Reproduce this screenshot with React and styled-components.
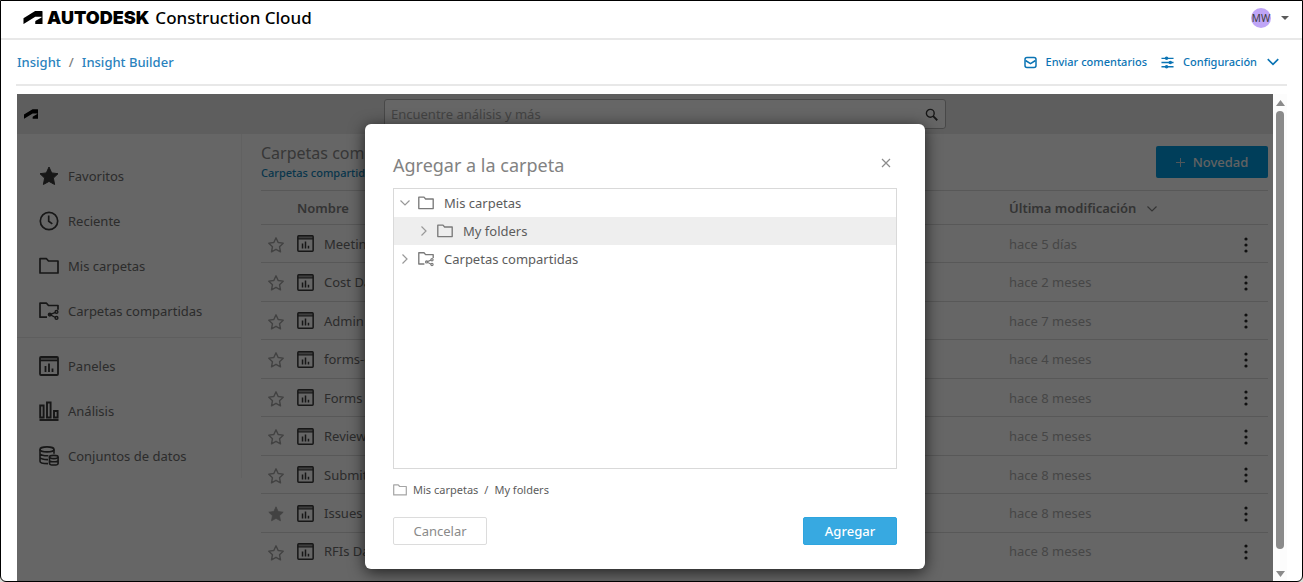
import styled, { createGlobalStyle, css } from "styled-components";

const GlobalStyle = createGlobalStyle`
  * {
    box-sizing: border-box;
  }
  html {
    background: #dcdcd6;
  }
  body {
    margin: 0;
    overflow: hidden;
    font-family: "Noto Sans", "Open Sans", sans-serif;
    font-size: 13px;
    line-height: 18px;
    color: #000;
  }
  button, input {
    font: inherit;
    color: inherit;
    margin: 0;
    padding: 0;
    border: 0;
    background: none;
  }
  a {
    text-decoration: none;
  }
`;

const Page = styled.div`
  display: flex;
  flex-direction: column;
  height: 100vh;
  border: 1px solid #000;
  border-radius: 0 0 6px 6px;
  background: #fff;
  overflow: hidden;
`;

/* ---------- product header ---------- */

const Header = styled.header`
  display: flex;
  flex: none;
  align-items: center;
  justify-content: space-between;
  height: 39px;
  padding: 0 13px 4px 22px;
  border-bottom: 2px solid #e8e8e8;
`;

const Brand = styled.div`
  display: flex;
  align-items: center;
  gap: 4px;
`;

const Wordmark = styled.span`
  font-family: Inter, sans-serif;
  font-size: 18px;
  font-weight: 900;
  line-height: 20px;
`;

const Product = styled.span`
  font-size: 17px;
  font-weight: 500;
  line-height: 20px;
  margin-left: 2px;
`;

const Account = styled.button`
  display: flex;
  align-items: center;
  gap: 10px;
`;

const Avatar = styled.span`
  width: 20px;
  height: 20px;
  border-radius: 50%;
  background: #bfa5f7;
  color: #3c3c3c;
  font-size: 10px;
  line-height: 20px;
  text-align: center;
`;

/* ---------- breadcrumb bar ---------- */

const SubBar = styled.div`
  display: flex;
  flex: none;
  align-items: center;
  justify-content: space-between;
  height: 46px;
  margin: 0 15px;
  padding: 0 7px 0 1px;
  border-bottom: 2px solid #e8e8e8;
  color: #0b74b4;
`;

const Crumbs = styled.nav`
  display: flex;
  gap: 8px;
  color: #808080;
  font-weight: 500;

  a {
    color: #2a82bd;
  }
`;

const Actions = styled.div`
  display: flex;
  gap: 14px;
`;

const Action = styled.button`
  display: flex;
  align-items: center;
  gap: 9px;
  font-size: 11px;
  font-weight: 500;
`;

/* ---------- embedded application ---------- */

const Frame = styled.div`
  display: flex;
  flex: 1;
  min-height: 0;
  margin: 8px 15px 0 16px;
`;

const Pane = styled.div`
  position: relative;
  flex: 1;
  min-width: 0;
  overflow: hidden;
  background: #fff;
`;

const TopBar = styled.div`
  display: flex;
  align-items: center;
  height: 40px;
  padding-left: 7px;
  background: #ececec;
`;

const TopLogo = styled.div`
  display: flex;
  flex: 0 0 360px;
`;

const Search = styled.label`
  display: flex;
  flex: 0 1 562px;
  align-items: center;
  height: 30px;
  padding: 0 7px 0 6px;
  border: 1px solid #b4b4b4;
  border-radius: 3px;
  background: #fff;

  input {
    flex: 1;
    outline: 0;
  }
  input::placeholder {
    color: #aaa;
    opacity: 1;
  }
  svg {
    color: #3a3a3a;
  }
`;

const Body = styled.div`
  display: flex;
  align-items: flex-start;
`;

const Side = styled.nav`
  flex: 0 0 225px;
  padding-top: 19px;
  border-right: 1px solid #f2f2f2;
`;

const SideLink = styled.a`
  display: flex;
  align-items: center;
  gap: 9px;
  height: 45px;
  padding-left: 22px;
  color: #6e6e6e;

  svg {
    color: #3a3a3a;
  }
`;

const SideRule = styled.hr`
  margin: 4px 0 5px;
  border: 0;
  border-top: 1px solid #eaeaea;
`;

const Content = styled.main`
  flex: 1;
  padding: 8px 5px 0 19px;
`;

const ContentHead = styled.div`
  display: flex;
  align-items: flex-start;
  justify-content: space-between;
  height: 48px;
`;

const ContentTitle = styled.h1`
  margin: 0;
  font-size: 16px;
  font-weight: 400;
  line-height: 22px;
  color: #8a8a8a;
`;

const ContentLink = styled.a`
  display: block;
  font-size: 11px;
  font-weight: 500;
  color: #1487bd;
`;

const NewButton = styled.button`
  display: flex;
  align-items: center;
  justify-content: center;
  gap: 8px;
  width: 112px;
  height: 32px;
  margin-top: 4px;
  border-radius: 2px;
  background: #009be0;
  color: #f4f4f4;
  font-weight: 500;

  svg {
    color: #c8d8e0;
  }
`;

const Table = styled.table`
  width: 100%;
  height: 380px;
  border-collapse: collapse;
  table-layout: fixed;
  border-top: 1px solid #dcdcdc;

  th, td {
    padding: 0;
    text-align: left;
    font-weight: 400;
  }
  tr {
    border-bottom: 1px solid #dcdcdc;
  }
  tbody tr:last-child {
    border-bottom: 0;
  }
  thead th {
    height: 34px;
    font-weight: 600;
    color: #828282;
  }
  thead svg {
    margin-left: 10px;
    vertical-align: middle;
  }
  td:first-child, td:last-child {
    text-align: center;
  }
  td:first-child {
    padding-right: 7px;
  }
  button {
    display: inline-flex;
    vertical-align: middle;
  }
`;

const StarCol = styled.col`
  width: 36px;
`;

const DateCol = styled.col`
  width: 214px;
`;

const MenuCol = styled.col`
  width: 45px;
`;

const StarButton = styled.button`
  color: #a5a5a5;
`;

const Name = styled.div`
  display: flex;
  align-items: center;
  gap: 10px;
  color: #6e6e6e;
  white-space: nowrap;

  svg {
    color: #3a3a3a;
  }
`;

const When = styled.td`
  color: #b0b0b0;
`;

/* ---------- dialog ---------- */

const Shade = styled.div`
  position: absolute;
  inset: 0;
  display: flex;
  align-items: flex-start;
  justify-content: center;
  padding-top: 30px;
  background: rgba(0, 0, 0, 0.6);
`;

const Dialog = styled.section`
  width: 560px;
  padding: 27px 28px 24px;
  border-radius: 6px;
  background: #fff;
  box-shadow: 0 3px 16px rgba(0, 0, 0, 0.7);
`;

const DialogHead = styled.div`
  display: flex;
  align-items: flex-start;
  justify-content: space-between;
  height: 28px;
  margin-bottom: 9px;
  padding-right: 6px;
  color: #8c8c8c;
`;

const DialogTitle = styled.h2`
  margin: 0;
  font-size: 18px;
  font-weight: 400;
  line-height: 28px;
  color: #828282;
`;

const CloseButton = styled.button`
  display: flex;
  align-items: center;
  height: 24px;
`;

const Tree = styled.div`
  height: 281px;
  border: 1px solid #d9d9d9;
`;

const TreeRow = styled.div`
  display: flex;
  align-items: center;
  height: 28px;
  padding-left: ${(props) => (props.$depth ? 24 : 5)}px;
  color: #5c5c5c;
  ${(props) => props.$selected && css`
    background: #eee;
  `}

  svg {
    color: #7a7a7a;
  }
`;

const Twisty = styled.button`
  display: flex;
  margin-right: 7px;

  svg {
    color: #999;
  }
`;

const TreeLabel = styled.span`
  margin-left: 10px;
`;

const Path = styled.div`
  display: flex;
  align-items: center;
  gap: 6px;
  height: 20px;
  margin-top: 11px;
  font-size: 11px;
  color: #5c5c5c;

  svg {
    color: #a5a5a5;
  }
`;

const DialogFoot = styled.div`
  display: flex;
  justify-content: space-between;
  margin-top: 17px;
`;

const DialogButton = styled.button`
  width: 94px;
  height: 28px;
  border: 1px solid ${(props) => (props.$primary ? "#2ea5df" : "#dcdcdc")};
  border-radius: 2px;
  background: ${(props) => (props.$primary ? "#37a9e1" : "#fff")};
  color: ${(props) => (props.$primary ? "#fff" : "#8a8a8a")};
  font-weight: ${(props) => (props.$primary ? 500 : 400)};
`;

/* ---------- scrollbar ---------- */

const ScrollTrack = styled.div`
  display: flex;
  flex: 0 0 14px;
  flex-direction: column;
  align-items: center;
  justify-content: space-between;
  padding: 6px 0 4px;
  background: #fcfcfc;
  color: #8a8a8a;
`;

const ScrollThumb = styled.div`
  flex: 1;
  width: 8px;
  margin: 5px 0 22px;
  border-radius: 4px;
  background: #8a8a8a;
`;

/* ---------- icons ---------- */

const Drawing = styled.svg`
  flex: none;
  fill: none;
  stroke: currentColor;
`;

const Svg = ({ size = 20, box = 20, width = 1.7, children }) => (
  <Drawing
    width={size}
    height={size}
    viewBox={`0 0 ${box} ${box}`}
    strokeWidth={width}
    aria-hidden="true"
  >
    {children}
  </Drawing>
);

const Logo = ({ width, height }) => (
  <svg width={width} height={height} viewBox="0 3.8 24 16.4" aria-hidden="true">
    <path
      fill="#000"
      d="M.13 20.2l14.7-9.13h7.62c.24 0 .45.18.45.44 0 .21-.1.3-.21.38l-7.22 4.32c-.47.28-.64.84-.64 1.26v2.73H24V4.36a.56.56 0 0 0-.59-.56h-8.75L0 12.9v7.3z"
    />
  </svg>
);

const STAR = "M10 1l2.7 5.9 6.3.8-4.6 4.4 1.2 6.4L10 15.4l-5.6 3.1 1.2-6.4L1 7.7l6.3-.8z";

const Star = ({ size, filled }) => (
  <Svg size={size} width={filled ? 1 : 1.8}>
    <path d={STAR} fill={filled ? "currentColor" : "none"} strokeLinejoin="round" />
  </Svg>
);

const Clock = () => (
  <Svg>
    <circle cx="10" cy="10" r="8.7" />
    <path d="M9.7 4.5v5.8l3.6 2.6" />
  </Svg>
);

const Folder = ({ size, width }) => (
  <Svg size={size} width={width}>
    <path d="M1 2.7h6.5l2 2.3H19v12H1z" strokeLinejoin="round" />
  </Svg>
);

const SharedFolder = ({ size, width }) => (
  <Svg size={size} width={width}>
    <path d="M8 16.2H1V2.2h6.5l2 2.3H19v4.3" strokeLinejoin="round" />
    <g strokeWidth="1.4">
      <path d="M16.5 11.3l-5.6 2.3 5.6 2.9" />
      <circle cx="17.5" cy="10.9" r="1.4" />
      <circle cx="10.8" cy="13.6" r="1.4" />
      <circle cx="17.5" cy="16.9" r="1.4" />
    </g>
  </Svg>
);

const Panel = ({ size }) => (
  <Svg size={size} width={1.8}>
    <path d="M1 1h18v3.4H1z" fill="currentColor" fillOpacity="0.5" stroke="none" />
    <rect x="1" y="1" width="18" height="18" rx="1" />
    <path d="M1 4.6h18" strokeWidth="1.4" />
    <path d="M6.5 10v6M10 7.5V16M13.5 12.5V16" />
  </Svg>
);

const Bars = () => (
  <Svg width={1.9}>
    <path d="M1.2 4.5h3.4v12H1.2zM8 1.5h3.6v15H8zM15 10h3.6v6.5H15z" />
    <path d="M.5 19h19" />
  </Svg>
);

const Database = () => (
  <Svg width={1.6}>
    <ellipse cx="8" cy="3.4" rx="7" ry="2.5" />
    <path d="M1 3.4v11.8c0 1.3 3 2.4 8 2.4M15 3.4v4.4M1 7.4c0 1.4 4 2.5 8.4 2.3M1 11.3c0 1.4 4 2.4 8 2.3" />
    <ellipse cx="14.8" cy="11" rx="4.3" ry="1.6" />
    <path d="M10.5 11v6.4c0 2.2 8.6 2.2 8.6 0V11M10.5 14.2c0 2.1 8.6 2.1 8.6 0" />
  </Svg>
);

const Chevron = ({ dir = "down", size = 12, width = 1.2 }) => (
  <Svg size={size} box={12} width={width}>
    <path d={dir === "down" ? "M1.5 3.5L6 8l4.5-4.5" : "M3.5 1.5L8 6l-4.5 4.5"} />
  </Svg>
);

const Mail = () => (
  <Svg size={13} box={13} width={1.5}>
    <rect x="1" y="1.5" width="11" height="10" rx="2" />
    <path d="M1.5 4.5l5 3.2 5-3.2" />
  </Svg>
);

const Sliders = () => (
  <Svg size={13} box={14} width={1.5}>
    <path d="M.5 2.5h13M.5 7h13M.5 11.5h13" />
    <g fill="currentColor" stroke="none">
      <circle cx="6" cy="2.5" r="1.9" />
      <circle cx="10" cy="7" r="1.9" />
      <circle cx="6" cy="11.5" r="1.9" />
    </g>
  </Svg>
);

const Magnifier = () => (
  <Svg size={13} box={14} width={1.5}>
    <circle cx="5.7" cy="5.7" r="4.2" />
    <path d="M8.8 8.8l4.4 4.4" strokeWidth="2" />
  </Svg>
);

const Dots = () => (
  <svg width="6" height="18" viewBox="0 0 6 18" fill="#2a2a2a" aria-hidden="true">
    <circle cx="3" cy="3" r="1.6" />
    <circle cx="3" cy="9" r="1.6" />
    <circle cx="3" cy="15" r="1.6" />
  </svg>
);

const Triangle = ({ up, width = 9, height = 6, color = "currentColor" }) => (
  <svg width={width} height={height} viewBox="0 0 9 6" preserveAspectRatio="none" fill={color} aria-hidden="true">
    <path d={up ? "M4.5 0L9 6H0z" : "M0 0h9L4.5 6z"} />
  </svg>
);

const mainLinks = [
  { label: "Favoritos", icon: <Star filled /> },
  { label: "Reciente", icon: <Clock /> },
  { label: "Mis carpetas", icon: <Folder /> },
  { label: "Carpetas compartidas", icon: <SharedFolder /> },
];

const dataLinks = [
  { label: "Paneles", icon: <Panel /> },
  { label: "Análisis", icon: <Bars /> },
  { label: "Conjuntos de datos", icon: <Database /> },
];

const rows = [
  { name: "Meetings", when: "hace 5 días" },
  { name: "Cost Data", when: "hace 2 meses" },
  { name: "Admin", when: "hace 7 meses" },
  { name: "forms-data", when: "hace 4 meses" },
  { name: "Forms", when: "hace 8 meses" },
  { name: "Reviews", when: "hace 5 meses" },
  { name: "Submittals", when: "hace 8 meses" },
  { name: "Issues", when: "hace 8 meses", starred: true },
  { name: "RFIs Data", when: "hace 8 meses" },
];

const App = () => {
  return (
    <>
      <GlobalStyle />
      <Page>
        <Header>
          <Brand>
            <Logo width={20} height={13} />
            <Wordmark>AUTODESK</Wordmark>
            <Product>Construction Cloud</Product>
          </Brand>
          <Account aria-label="Cuenta">
            <Avatar>MW</Avatar>
            <Triangle width={8} height={4} color="#5a5a5a" />
          </Account>
        </Header>

        <SubBar>
          <Crumbs>
            <a href="#insight">Insight</a>
            <span>/</span>
            <a href="#builder">Insight Builder</a>
          </Crumbs>
          <Actions>
            <Action>
              <Mail />
              Enviar comentarios
            </Action>
            <Action>
              <Sliders />
              Configuración
              <Chevron size={14} width={1.4} />
            </Action>
          </Actions>
        </SubBar>

        <Frame>
          <Pane>
            <TopBar>
              <TopLogo>
                <Logo width={14} height={10} />
              </TopLogo>
              <Search>
                <input type="text" placeholder="Encuentre análisis y más" aria-label="Buscar" />
                <Magnifier />
              </Search>
            </TopBar>
            <Body>
              <Side>
                {mainLinks.map((item) => (
                  <SideLink href="#" key={item.label}>
                    {item.icon}
                    {item.label}
                  </SideLink>
                ))}
                <SideRule />
                {dataLinks.map((item) => (
                  <SideLink href="#" key={item.label}>
                    {item.icon}
                    {item.label}
                  </SideLink>
                ))}
              </Side>
              <Content>
                <ContentHead>
                  <div>
                    <ContentTitle>Carpetas compartidas</ContentTitle>
                    <ContentLink href="#">Carpetas compartidas</ContentLink>
                  </div>
                  <NewButton>
                    <Svg size={9} box={9} width={1}>
                      <path d="M4.5 0v9M0 4.5h9" />
                    </Svg>
                    Novedad
                  </NewButton>
                </ContentHead>
                <Table>
                  <colgroup>
                    <StarCol />
                    <col />
                    <DateCol />
                    <MenuCol />
                  </colgroup>
                  <thead>
                    <tr>
                      <th />
                      <th>Nombre</th>
                      <th>
                        Última modificación
                        <Chevron />
                      </th>
                      <th />
                    </tr>
                  </thead>
                  <tbody>
                    {rows.map((row) => (
                      <tr key={row.name}>
                        <td>
                          <StarButton aria-label="Favorito">
                            <Star size={16} filled={row.starred} />
                          </StarButton>
                        </td>
                        <td>
                          <Name>
                            <Panel size={17} />
                            {row.name}
                          </Name>
                        </td>
                        <When>{row.when}</When>
                        <td>
                          <button aria-label="Acciones">
                            <Dots />
                          </button>
                        </td>
                      </tr>
                    ))}
                  </tbody>
                </Table>
              </Content>
            </Body>

            <Shade>
              <Dialog role="dialog" aria-labelledby="dialog-title">
                <DialogHead>
                  <DialogTitle id="dialog-title">Agregar a la carpeta</DialogTitle>
                  <CloseButton aria-label="Cerrar">
                    <Svg size={10} box={10} width={1.2}>
                      <path d="M1 1l8 8M9 1L1 9" />
                    </Svg>
                  </CloseButton>
                </DialogHead>
                <Tree>
                  <TreeRow>
                    <Twisty aria-label="Contraer">
                      <Chevron />
                    </Twisty>
                    <Folder size={16} />
                    <TreeLabel>Mis carpetas</TreeLabel>
                  </TreeRow>
                  <TreeRow $depth={1} $selected>
                    <Twisty aria-label="Expandir">
                      <Chevron dir="right" />
                    </Twisty>
                    <Folder size={16} />
                    <TreeLabel>My folders</TreeLabel>
                  </TreeRow>
                  <TreeRow>
                    <Twisty aria-label="Expandir">
                      <Chevron dir="right" />
                    </Twisty>
                    <SharedFolder size={16} />
                    <TreeLabel>Carpetas compartidas</TreeLabel>
                  </TreeRow>
                </Tree>
                <Path>
                  <Folder size={14} />
                  <span>Mis carpetas</span>
                  <span>/</span>
                  <span>My folders</span>
                </Path>
                <DialogFoot>
                  <DialogButton>Cancelar</DialogButton>
                  <DialogButton $primary>Agregar</DialogButton>
                </DialogFoot>
              </Dialog>
            </Shade>
          </Pane>
          <ScrollTrack>
            <Triangle up />
            <ScrollThumb />
            <Triangle />
          </ScrollTrack>
        </Frame>
      </Page>
    </>
  );
};

export default App;
